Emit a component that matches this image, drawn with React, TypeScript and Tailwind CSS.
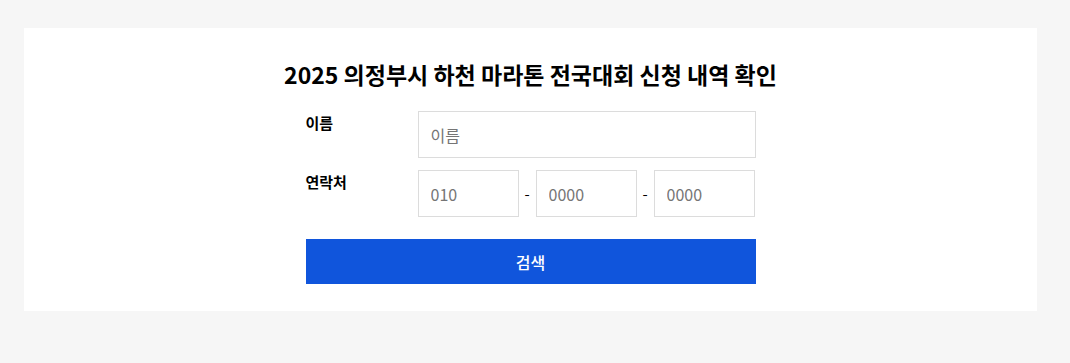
export default function App() {
  const inputClass =
    'h-[47px] border border-[#dcdcdc] bg-white px-3 text-[16px] text-[#333] placeholder-[#757575] outline-none';

  return (
    <div className="min-h-[363px] bg-[#f6f6f6] pt-[28px] pb-[52px] font-['Noto_Sans_CJK_KR','Noto_Sans',sans-serif]">
      <div className="ml-[24px] w-[1013px] bg-white pt-[33px] pb-[27px]">
        {/* Title */}
        <h1 className="text-center text-[23px] leading-[26px] font-bold text-black">
          2025 의정부시 하천 마라톤 전국대회 신청 내역 확인
        </h1>

        <div className="mx-auto mt-[24px] w-[450px]">
          {/* Name */}
          <div className="flex">
            <label className="w-[112px] pt-[1px] text-[15px] leading-[22px] font-bold text-black">이름</label>
            <input type="text" placeholder="이름" className={`${inputClass} w-[338px]`} />
          </div>

          {/* Phone */}
          <div className="mt-[12px] flex">
            <label className="w-[112px] pt-[1px] text-[15px] leading-[22px] font-bold text-black">연락처</label>
            <div className="flex items-center">
              <input type="text" placeholder="010" className={`${inputClass} w-[101px]`} />
              <span className="w-[17px] text-center text-[15px] leading-[22px] text-black">-</span>
              <input type="text" placeholder="0000" className={`${inputClass} w-[101px]`} />
              <span className="w-[17px] text-center text-[15px] leading-[22px] text-black">-</span>
              <input type="text" placeholder="0000" className={`${inputClass} w-[101px]`} />
            </div>
          </div>

          {/* Search */}
          <button className="mt-[22px] h-[45px] w-full bg-[#1055dc] text-[16px] font-medium text-white">
            검색
          </button>
        </div>
      </div>
    </div>
  );
}
